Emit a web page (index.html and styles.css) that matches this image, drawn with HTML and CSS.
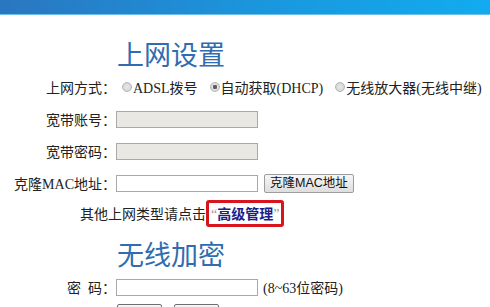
FILE: index.html
```html
<!DOCTYPE html>
<html lang="zh-CN">
<head>
    <meta charset="UTF-8">
    <meta name="viewport" content="width=device-width, initial-scale=1.0">
    <title>上网设置</title>
    <link rel="stylesheet" href="styles.css">
</head>
<body>

<div class="topbar"></div>

<div class="wrap">
    <h2 class="title">上网设置</h2>

    <div class="row">
        <span class="label">上网方式：</span>
        <div class="field">
            <label class="opt"><input type="radio" name="wan" class="radio">ADSL拨号</label>
            <label class="opt"><input type="radio" name="wan" class="radio" checked>自动获取(DHCP)</label>
            <label class="opt"><input type="radio" name="wan" class="radio">无线放大器(无线中继)</label>
        </div>
    </div>
    <div class="row">
        <span class="label">宽带账号：</span>
        <div class="field"><input type="text" class="txt" disabled></div>
    </div>
    <div class="row">
        <span class="label">宽带密码：</span>
        <div class="field"><input type="password" class="txt" disabled></div>
    </div>
    <div class="row">
        <span class="label">克隆MAC地址：</span>
        <div class="field">
            <input type="text" class="txt">
            <button class="btn">克隆MAC地址</button>
        </div>
    </div>
    <div class="row tip">其他上网类型请点击<span class="mark">“<b>高级管理</b>”</span></div>

    <h2 class="title title2">无线加密</h2>

    <div class="row">
        <span class="label">密&ensp;码：</span>
        <div class="field">
            <input type="password" class="txt">
            <span class="hint">(8~63位密码)</span>
        </div>
    </div>
    <div class="row">
        <span class="label"></span>
        <div class="field buttons">
            <button class="btn small" aria-label="保存"></button>
            <button class="btn small" aria-label="取消"></button>
        </div>
    </div>
</div>

</body>
</html>
```

FILE: styles.css
```css
body{
    margin: 0;
    background-color: #fff;
    font-family: "Liberation Serif", "Noto Sans CJK SC", serif;
    font-size: 14px;
    color: #222;
}
.topbar{
    height: 14px;
    background: linear-gradient(to right, #2a76c0, #1b95dc 50%, #12abef);
    border-bottom: 1px solid #6cc0ec;
}

.wrap{
    width: 490px;
}
.title{
    margin: 0;
    padding: 24px 0 2px 117px;
    line-height: 30px;
    font-size: 27px;
    font-weight: normal;
    color: #2f6cb0;
    font-family: "Noto Sans CJK SC", serif;
}
.title2{
    padding-top: 12px;
}

.row{
    display: flex;
    align-items: center;
    height: 32px;
}
.label{
    width: 116px;
    flex-shrink: 0;
    text-align: right;
}
.field{
    display: flex;
    align-items: center;
}

.opt{
    display: flex;
    align-items: center;
    margin-right: 12px;
    white-space: nowrap;
}
.opt:first-child{
    margin-left: 6px;
}
.opt:last-child{
    margin-right: 0;
}
.radio{
    appearance: none;
    width: 10px;
    height: 10px;
    margin: 0 1px 0 0;
    border: 1px solid #b4b4b4;
    border-radius: 50%;
    background: radial-gradient(circle, #e8e8e8, #cfcfcf);
    box-sizing: border-box;
}
.radio:checked{
    background: radial-gradient(circle, #555 0, #666 2px, #e4e4e4 2.5px, #d0d0d0);
}

.txt{
    width: 142px;
    height: 17px;
    margin: 0;
    padding: 0 2px;
    border: 1px solid #a9a9a9;
    box-sizing: border-box;
    background-color: #fff;
    font-size: 13px;
}
.txt:disabled{
    background-color: #e9e8e3;
}

.btn{
    margin: 0 0 0 6px;
    height: 19px;
    padding: 0 5px;
    border: 1px solid #9d9d9d;
    border-radius: 2px;
    background: linear-gradient(#f6f6f6, #dedede);
    font-family: "Liberation Sans", "Noto Sans CJK SC", sans-serif;
    font-size: 12.5px;
    color: #111;
    line-height: 17px;
}
.buttons{
    align-self: flex-start;
    padding-top: 1px;
}
.small{
    width: 45px;
    margin-left: 1px;
    margin-right: 11px;
    height: 22px;
    border-color: #707070;
}

.tip{
    height: 28px;
    padding-left: 80px;
}
.mark{
    display: inline-block;
    padding: 1px 2px 0 2px;
    line-height: 18px;
    border: 3px solid #d8141c;
    border-radius: 3px;
    color: #999;
}
.mark b{
    color: #1d1d8a;
    font-family: "Noto Sans CJK SC", sans-serif;
}

.hint{
    margin-left: 5px;
}
```
